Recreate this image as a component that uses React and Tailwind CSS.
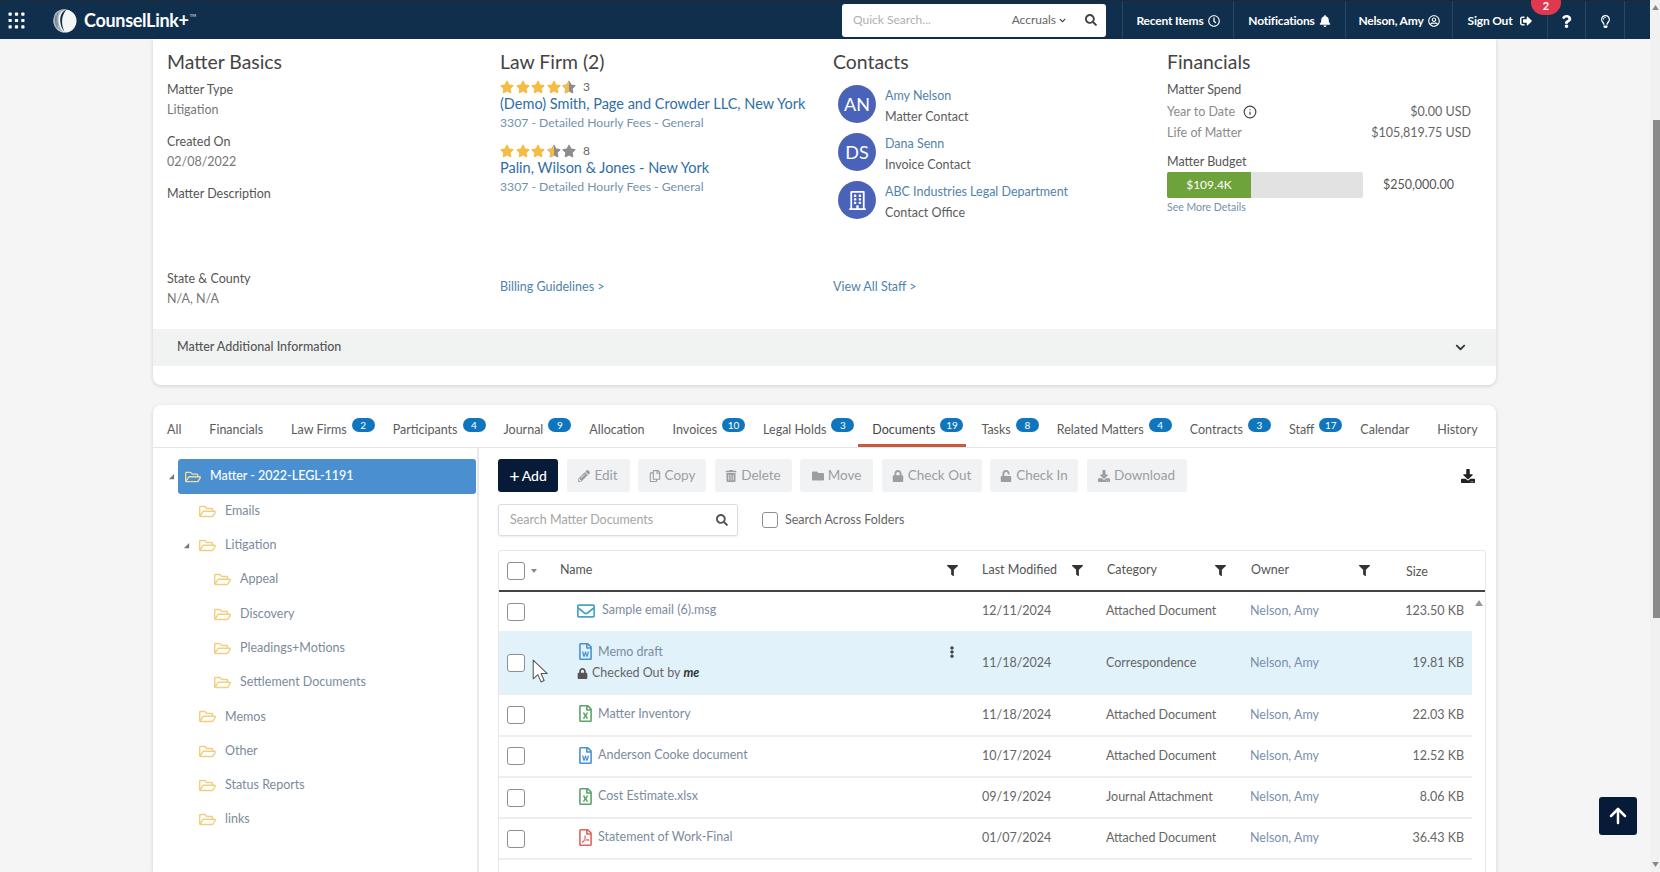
import { ArrowUp, Info } from "lucide-react";
import {
  FaBell,
  FaChevronDown,
  FaDownload,
  FaEllipsisV,
  FaFilter,
  FaFolder,
  FaLock,
  FaPencilAlt,
  FaQuestion,
  FaRegBuilding,
  FaRegClock,
  FaRegCopy,
  FaRegEnvelope,
  FaRegFileExcel,
  FaRegFilePdf,
  FaRegFileWord,
  FaRegFolderOpen,
  FaRegLightbulb,
  FaRegUserCircle,
  FaSearch,
  FaSignOutAlt,
  FaStar,
  FaStarHalf,
  FaTrashAlt,
  FaUnlock,
} from "react-icons/fa";

const tabs = [
  { label: "All" },
  { label: "Financials" },
  { label: "Law Firms", count: 2 },
  { label: "Participants", count: 4 },
  { label: "Journal", count: 9 },
  { label: "Allocation" },
  { label: "Invoices", count: 10 },
  { label: "Legal Holds", count: 3 },
  { label: "Documents", count: 19, active: true },
  { label: "Tasks", count: 8 },
  { label: "Related Matters", count: 4 },
  { label: "Contracts", count: 3 },
  { label: "Staff", count: 17 },
  { label: "Calendar" },
  { label: "History" },
];

const folders = [
  { label: "Emails", pad: "pl-[46px]" },
  { label: "Litigation", pad: "pl-[46px]", open: true },
  { label: "Appeal", pad: "pl-[61px]" },
  { label: "Discovery", pad: "pl-[61px]" },
  { label: "Pleadings+Motions", pad: "pl-[61px]" },
  { label: "Settlement Documents", pad: "pl-[61px]" },
  { label: "Memos", pad: "pl-[46px]" },
  { label: "Other", pad: "pl-[46px]" },
  { label: "Status Reports", pad: "pl-[46px]" },
  { label: "links", pad: "pl-[46px]" },
];

const buttons = [
  { label: "Edit", icon: FaPencilAlt, w: "w-[63px]" },
  { label: "Copy", icon: FaRegCopy, w: "w-[68px]" },
  { label: "Delete", icon: FaTrashAlt, w: "w-[77px]" },
  { label: "Move", icon: FaFolder, w: "w-[73px]" },
  { label: "Check Out", icon: FaLock, w: "w-[100px]" },
  { label: "Check In", icon: FaUnlock, w: "w-[88px]" },
  { label: "Download", icon: FaDownload, w: "w-[100px]" },
];

const docs = [
  { name: "Sample email (6).msg", type: "mail", date: "12/11/2024", category: "Attached Document", size: "123.50 KB" },
  { name: "Memo draft", type: "word", date: "11/18/2024", category: "Correspondence", size: "19.81 KB", checkedOut: true },
  { name: "Matter Inventory", type: "excel", date: "11/18/2024", category: "Attached Document", size: "22.03 KB" },
  { name: "Anderson Cooke document", type: "word", date: "10/17/2024", category: "Attached Document", size: "12.52 KB" },
  { name: "Cost Estimate.xlsx", type: "excel", date: "09/19/2024", category: "Journal Attachment", size: "8.06 KB" },
  { name: "Statement of Work-Final", type: "pdf", date: "01/07/2024", category: "Attached Document", size: "36.43 KB" },
];

const Triangle = ({ className }) => (
  <svg viewBox="0 0 8 8" className={`w-[7px] h-[7px] ${className}`}>
    <path d="M7 1v6H1z" fill="currentColor" />
  </svg>
);

const GridDots = () => (
  <svg viewBox="0 0 16 16" className="w-[17px] h-[17px] text-white">
    {[2, 8, 14].map((y) =>
      [2, 8, 14].map((x) => (
        <rect key={`${x}-${y}`} x={x - 1.5} y={y - 1.5} width="3" height="3" rx="0.6" fill="currentColor" />
      ))
    )}
  </svg>
);

const Logo = () => (
  <svg viewBox="0 0 26 26" className="w-[26px] h-[26px]">
    <circle cx="13" cy="14" r="11.500" fill="#f4f5f6" />
    <path d="M3 6.500C6 3 10 1.800 14.500 2.500 9 3.500 6.500 7 6.500 13c0 5 1.500 8.500 4.500 12C5.500 24 1.500 19.500 1.500 14c0-2.800.5-5.300 1.500-7.500z" fill="#a9b2ba" />
    <path d="M4 8.500c-1 3.500-.8 8 1.500 12M6 6c-1.500 3-2 8-.2 12" stroke="#5d6b78" strokeWidth="0.7" fill="none" />
    <path d="M14.500 2.500C10.500 4 8 8 8.200 13.500c.2 4.500 1.500 8 4.300 11.500-1.800-4-2.600-7.500-2.400-11.500.2-4.500 2-8 4.400-11z" fill="#0f2f4d" />
  </svg>
);

const Stars = ({ full, half, count }) => (
  <div className="flex items-center h-[16px]">
    {[0, 1, 2, 3, 4].map((i) => (
      <span key={i} className="relative w-[15.600px] text-[14px] text-[#8c8c8c]">
        <FaStar className={i < full ? "text-[#f5bb45]" : ""} />
        {i === full && half && <FaStarHalf className="absolute left-0 top-0 text-[#f5bb45]" />}
      </span>
    ))}
    <span className="ml-[5px] text-[12px] text-[#666]">{count}</span>
  </div>
);

const Contact = ({ initials, icon, name, role }) => (
  <div className="flex items-center h-[48px]">
    <div className="ml-[5px] w-[38px] h-[38px] rounded-full bg-[#4a63b8] flex items-center justify-center text-white text-[18px]">
      {initials}
      {icon && <FaRegBuilding className="text-[19px]" />}
    </div>
    <div className="ml-[9px] pt-[5px]">
      <div className="text-[#4f83ad] leading-[21px]">{name}</div>
      <div className="text-[#5c5c5c] leading-[22px]">{role}</div>
    </div>
  </div>
);

const HeaderItem = ({ width, children }) => (
  <div className={`${width} h-full pt-[2px] flex items-center justify-center gap-[4px] border-l border-[#274763] text-white text-[12px] font-bold tracking-[-0.2px]`}>
    {children}
  </div>
);

const Header = () => (
  <header className="h-[39px] shrink-0 flex items-center bg-[#0f2f4d] border-t border-[#1c2a38]">
    <div className="ml-[8px]">
      <GridDots />
    </div>
    <div className="ml-[27px]">
      <Logo />
    </div>
    <div className="ml-[6px] text-white text-[18px] font-bold tracking-[-0.3px]">CounselLink+</div>
    <span className="ml-[1px] text-white text-[4px] self-start mt-[12px]">TM</span>
    <div className="ml-auto mr-[16px] w-[264px] h-[33px] bg-white rounded-[3px] flex items-center pl-[11px] pr-[9px] text-[12px]">
      <span className="text-[#b0b0b0]">Quick Search...</span>
      <span className="ml-auto text-[#666] flex items-center gap-[3px]">
        Accruals <FaChevronDown className="text-[7px] text-[#333]" />
      </span>
      <FaSearch className="ml-[19px] text-[12px] text-[#444]" />
    </div>
    <HeaderItem width="w-[111px]">
      Recent Items <FaRegClock className="text-[12px]" />
    </HeaderItem>
    <HeaderItem width="w-[112px]">
      Notifications <FaBell className="text-[12px]" />
    </HeaderItem>
    <HeaderItem width="w-[107px]">
      Nelson, Amy <FaRegUserCircle className="text-[12px]" />
    </HeaderItem>
    <HeaderItem width="w-[95px]">
      Sign Out <FaSignOutAlt className="ml-[4px] text-[12px]" />
    </HeaderItem>
    <HeaderItem width="w-[38px]">
      <FaQuestion className="text-[13px]" />
    </HeaderItem>
    <HeaderItem width="w-[39px]">
      <FaRegLightbulb className="text-[13px]" />
    </HeaderItem>
    <div className="w-[26px] h-full border-l border-[#274763]" />
  </header>
);

const MatterSummary = () => (
  <section className="ml-[153px] w-[1343px] h-[346px] shrink-0 bg-white rounded-b-[8px] shadow-[0_1px_4px_rgba(0,0,0,0.15)] text-[12.500px] flex flex-col">
    <div className="h-[290px] grid grid-cols-[333px_333px_334px_1fr] pl-[14px]">
      <div className="flex flex-col pt-[11px]">
        <h2 className="text-[19.400px] leading-[24px] text-[#444]">Matter Basics</h2>
        <div className="mt-[6px] leading-[20px] text-[#555]">Matter Type</div>
        <div className="leading-[20px] text-[#777]">Litigation</div>
        <div className="mt-[12px] leading-[20px] text-[#555]">Created On</div>
        <div className="leading-[20px] text-[#777]">02/08/2022</div>
        <div className="mt-[12px] leading-[20px] text-[#555]">Matter Description</div>
        <div className="mt-auto mb-[20px]">
          <div className="leading-[20px] text-[#555]">State &amp; County</div>
          <div className="leading-[20px] text-[#777]">N/A, N/A</div>
        </div>
      </div>

      <div className="flex flex-col pt-[11px]">
        <h2 className="text-[19.400px] leading-[24px] text-[#444]">Law Firm (2)</h2>
        <div className="mt-[5px]">
          <Stars full={4} half count="3" />
        </div>
        <div className="-mt-[1px] text-[14.500px] leading-[20px] text-[#2f6ea5]">(Demo) Smith, Page and Crowder LLC, New York</div>
        <div className="text-[12.200px] leading-[18px] text-[#7391ac]">3307 - Detailed Hourly Fees - General</div>
        <div className="mt-[11px]">
          <Stars full={3} half count="8" />
        </div>
        <div className="-mt-[1px] text-[14.500px] leading-[20px] text-[#2f6ea5]">Palin, Wilson &amp; Jones - New York</div>
        <div className="text-[12.200px] leading-[18px] text-[#7391ac]">3307 - Detailed Hourly Fees - General</div>
        <div className="mt-auto mb-[32px] text-[#4f83ad]">Billing Guidelines &gt;</div>
      </div>

      <div className="flex flex-col pt-[11px]">
        <h2 className="text-[19.400px] leading-[24px] text-[#444]">Contacts</h2>
        <div className="mt-[6px]">
          <Contact initials="AN" name="Amy Nelson" role="Matter Contact" />
          <Contact initials="DS" name="Dana Senn" role="Invoice Contact" />
          <Contact icon name="ABC Industries Legal Department" role="Contact Office" />
        </div>
        <div className="mt-auto mb-[32px] text-[#4f83ad]">View All Staff &gt;</div>
      </div>

      <div className="flex flex-col pt-[11px] pr-[25px]">
        <h2 className="text-[19.400px] leading-[24px] text-[#444]">Financials</h2>
        <div className="mt-[6px] leading-[20px] text-[#555]">Matter Spend</div>
        <div className="mt-[1px] leading-[21px] flex items-center text-[#8a8a8a]">
          Year to Date
          <Info className="ml-[8px] w-[14px] h-[14px] text-[#444]" strokeWidth={2} />
          <span className="ml-auto text-[#666]">$0.00 USD</span>
        </div>
        <div className="leading-[22px] flex justify-between text-[#8a8a8a]">
          Life of Matter
          <span className="text-[#666]">$105,819.75 USD</span>
        </div>
        <div className="mt-[8px] leading-[20px] text-[#555]">Matter Budget</div>
        <div className="flex items-center">
          <div className="w-[196px] h-[26px] rounded-[2px] bg-[#e2e2e2] overflow-hidden">
            <div className="w-[84px] h-full bg-[#6ea23a] flex items-center justify-center text-white text-[12px]">$109.4K</div>
          </div>
          <span className="ml-[20px] text-[#555]">$250,000.00</span>
        </div>
        <div className="mt-[2px] text-[10.500px] text-[#7391ac]">See More Details</div>
      </div>
    </div>
    <div className="h-[37px] shrink-0 bg-[#f1f3f3] flex items-center justify-between pl-[24px] pr-[30px] text-[#555] font-medium">
      Matter Additional Information
      <FaChevronDown className="text-[11px] text-[#333]" />
    </div>
  </section>
);

const Tabs = () => (
  <nav className="h-[43px] shrink-0 border-b border-[#e3e5e6] flex items-stretch text-[12.500px] text-[#5c5c5c] whitespace-nowrap">
    {tabs.map((tab) => (
      <div
        key={tab.label}
        className={`flex items-center pt-[11px] pl-[14px] border-b-[3px] ${tab.active ? "border-[#c9593b] text-[#444] pr-[3px] mr-[1px]" : "border-transparent"} ${tab.count && !tab.active ? "pr-[4px]" : ""} ${!tab.count ? "pr-[14px]" : ""}`}
      >
        {tab.label}
        {tab.count && (
          <span className="ml-[5px] -translate-y-[5px] min-w-[23px] h-[14px] px-[4px] rounded-full bg-[#0f75bc] text-white text-[10px] leading-[14px] text-center">
            {tab.count}
          </span>
        )}
      </div>
    ))}
  </nav>
);

const FolderTree = () => (
  <aside className="w-[326px] shrink-0 border-r-2 border-[#e8e9ea] pt-[11px] text-[12.500px]">
    <div className="flex items-center h-[35px]">
      <Triangle className="ml-[15px] text-[#777]" />
      <div className="ml-[3px] w-[298px] h-full rounded-[3px] bg-[#4a90d0] flex items-center text-white pl-[7px] font-medium">
        <FaRegFolderOpen className="text-[16px] text-[#f2dc9a]" />
        <span className="ml-[9px]">Matter - 2022-LEGL-1191</span>
      </div>
    </div>
    {folders.map((f) => (
      <div key={f.label} className={`relative flex items-center h-[34.300px] ${f.pad} text-[#7c8b9b]`}>
        {f.open && <Triangle className="absolute left-[30px] text-[#777]" />}
        <FaRegFolderOpen className="text-[17px] text-[#f0cf7f]" />
        <span className="ml-[9px]">{f.label}</span>
      </div>
    ))}
  </aside>
);

const Checkbox = () => <span className="block w-[18px] h-[18px] rounded-[3px] border border-[#8f8f8f] bg-white" />;

const FileIcon = ({ type }) => {
  if (type === "mail") return <FaRegEnvelope className="text-[18px] text-[#4aa3c7]" />;
  if (type === "word") return <FaRegFileWord className="text-[17px] text-[#4a90d0]" />;
  if (type === "excel") return <FaRegFileExcel className="text-[17px] text-[#5aa469]" />;
  return <FaRegFilePdf className="text-[17px] text-[#e0645c]" />;
};

const HeadCell = ({ label, className }) => (
  <div className={`flex items-center justify-between shrink-0 ${className}`}>
    <span>{label}</span>
    <FaFilter className="text-[11px] text-[#333]" />
  </div>
);

const DocRow = ({ doc }) => (
  <div
    className={`flex items-center pl-[8px] border-b-2 border-[#eeeeee] ${doc.checkedOut ? "h-[62px] bg-[#e1f2fb]" : "h-[41.300px]"}`}
  >
    <div className="w-[70px] shrink-0">
      <Checkbox />
    </div>
    <div className="w-[405px] shrink-0">
      <div className="flex items-center pr-[24px] -translate-y-[1px]">
        <FileIcon type={doc.type} />
        <span className={`text-[#7b8ca0] ${doc.type === "mail" ? "ml-[7px]" : "ml-[4px]"}`}>{doc.name}</span>
        {doc.checkedOut && <FaEllipsisV className="ml-auto text-[12px] text-[#444]" />}
      </div>
      {doc.checkedOut && (
        <div className="flex items-center mt-[2px] text-[#666]">
          <FaLock className="text-[11px] text-[#555]" />
          <span className="ml-[4px]">
            Checked Out by <b className="italic text-[#333]">me</b>
          </span>
        </div>
      )}
    </div>
    <div className="w-[124px] shrink-0 text-[#666]">{doc.date}</div>
    <div className="w-[144px] shrink-0 text-[#666]">{doc.category}</div>
    <div className="text-[#7b8fb0]">Nelson, Amy</div>
    <div className="ml-auto pr-[8px] text-[#666]">{doc.size}</div>
  </div>
);

const Documents = () => (
  <div className="flex-1 min-w-0 pt-[11px] pl-[19px] pr-[10px] text-[12.500px]">
    <div className="flex items-center gap-[8.500px]">
      <div className="w-[60px] h-[33px] rounded-[3px] bg-[#071b38] text-white flex items-center justify-center text-[14px] font-medium">
        <span className="text-[18px] leading-none mr-[2px]">+</span>Add
      </div>
      {buttons.map(({ label, icon: Icon, w }) => (
        <div key={label} className={`${w} h-[33px] rounded-[3px] bg-[#f0f2f3] text-[#9b9fa3] flex items-center justify-center gap-[4px] text-[13.500px]`}>
          <Icon className="text-[12px]" />
          {label}
        </div>
      ))}
      <FaDownload className="ml-auto mr-[11px] text-[14px] text-[#222]" />
    </div>

    <div className="mt-[12px] flex items-center">
      <div className="w-[240px] h-[32px] rounded-[3px] border border-[#dcdcdc] flex items-center justify-between pl-[11px] pr-[9px] shadow-[0_1px_2px_rgba(0,0,0,0.08)]">
        <span className="text-[#a5a5a5]">Search Matter Documents</span>
        <FaSearch className="text-[12px] text-[#555]" />
      </div>
      <span className="ml-[24px] block w-[16px] h-[16px] rounded-[3px] border border-[#8f8f8f]" />
      <span className="ml-[7px] text-[#666]">Search Across Folders</span>
    </div>

    <div className="mt-[14px] border border-[#e8e8e8] rounded-t-[3px]">
      <div className="h-[41px] flex items-center pl-[8px] border-b-2 border-[#444] text-[#555]">
        <div className="w-[53px] shrink-0 flex items-center gap-[6px]">
          <Checkbox />
          <svg viewBox="0 0 6 4" className="w-[6px] h-[4px] text-[#888]">
            <path d="M0 0h6L3 4z" fill="currentColor" />
          </svg>
        </div>
        <HeadCell label="Name" className="w-[422px] pr-[24px]" />
        <HeadCell label="Last Modified" className="w-[125px] pr-[24px]" />
        <HeadCell label="Category" className="w-[144px] pr-[25px]" />
        <HeadCell label="Owner" className="w-[155px] pr-[36px]" />
        <span className="mt-[4px]">Size</span>
      </div>
      <div className="flex">
        <div className="flex-1 min-w-0">
          {docs.map((doc) => (
            <DocRow key={doc.name} doc={doc} />
          ))}
          <div className="h-[41px] flex items-center pl-[8px]">
            <div className="w-[70px] shrink-0">
              <Checkbox />
            </div>
            <FileIcon type="pdf" />
          </div>
        </div>
        <div className="w-[13px] shrink-0 pt-[8px] flex justify-center">
          <svg viewBox="0 0 8 6" className="w-[8px] h-[6px] text-[#999]">
            <path d="M4 0l4 6H0z" fill="currentColor" />
          </svg>
        </div>
      </div>
    </div>
  </div>
);

export default function App() {
  return (
    <div className="relative w-[1660px] h-[872px] overflow-hidden flex bg-[#f5f5f5] font-['Lato',sans-serif]">
      <div className="w-[1650px] shrink-0 h-full flex flex-col">
        <Header />
        <MatterSummary />
        <section className="ml-[153px] w-[1343px] mt-[20px] flex-1 min-h-0 bg-white rounded-t-[8px] shadow-[0_1px_4px_rgba(0,0,0,0.15)] flex flex-col">
          <Tabs />
          <div className="flex flex-1 min-h-0">
            <FolderTree />
            <Documents />
          </div>
        </section>
      </div>

      {/* page scrollbar */}
      <div className="flex-1 h-full bg-[#f1f1f1] flex flex-col items-center">
        <svg viewBox="0 0 8 6" className="mt-[5px] w-[7px] h-[5px] text-[#888]">
          <path d="M4 0l4 6H0z" fill="currentColor" />
        </svg>
        <div className="mt-[110px] ml-[3px] w-[7px] h-[498px] bg-[#8a8a8a]" />
        <svg viewBox="0 0 8 6" className="mt-auto mb-[5px] w-[7px] h-[5px] text-[#888]">
          <path d="M0 0h8L4 6z" fill="currentColor" />
        </svg>
      </div>

      {/* notification bubble, back to top and mouse pointer sit over the page */}
      <div className="absolute left-[1531px] top-[-10px] w-[30px] h-[25px] rounded-full bg-[#e0384f] text-white text-[11px] font-bold flex items-end justify-center pb-[1px]">
        2
      </div>
      <div className="absolute left-[1599px] top-[797px] w-[38px] h-[38px] rounded-[3px] bg-[#071b38] flex items-center justify-center text-white">
        <ArrowUp className="w-[24px] h-[24px]" strokeWidth={2.5} />
      </div>
      <svg viewBox="0 0 16 24" className="absolute left-[532px] top-[659px] w-[17px] h-[25px]">
        <path d="M1 1v18l4.500-4 3 7 3-1.300-3-6.700h6z" fill="#fff" stroke="#555" strokeWidth="1" strokeLinejoin="round" />
      </svg>
    </div>
  );
}
